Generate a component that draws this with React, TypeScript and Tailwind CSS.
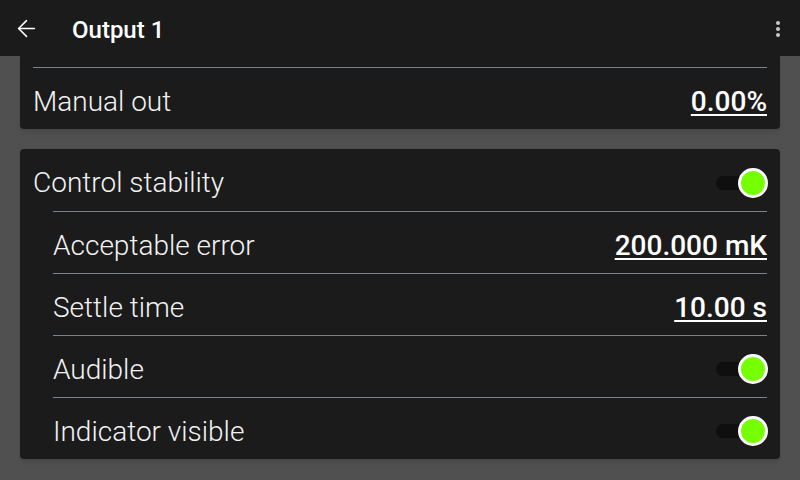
import { ArrowLeft } from "lucide-react";

type Row =
  | { label: string; kind: "value"; value: string; indent?: boolean }
  | { label: string; kind: "toggle"; on: boolean; indent?: boolean };

const stability: Row[] = [
  { label: "Control stability", kind: "toggle", on: true },
  { label: "Acceptable error", kind: "value", value: "200.000 mK", indent: true },
  { label: "Settle time", kind: "value", value: "10.00 s", indent: true },
  { label: "Audible", kind: "toggle", on: true, indent: true },
  { label: "Indicator visible", kind: "toggle", on: true, indent: true },
];

function Toggle({ on }: { on: boolean }) {
  return (
    <div className="relative h-[30px] w-[52px]">
      <div className="absolute left-0 top-[8px] h-[14px] w-[36px] rounded-full bg-[#0f0f0f]" />
      <div
        className={
          on
            ? "absolute right-0 top-0 h-[30px] w-[30px] rounded-full border-[3px] border-white bg-[#76ff03]"
            : "absolute left-0 top-0 h-[30px] w-[30px] rounded-full border-[3px] border-white bg-[#9e9e9e]"
        }
      />
    </div>
  );
}

function SettingRow({ row, first }: { row: Row; first?: boolean }) {
  return (
    <div className={row.indent ? "pl-5" : ""}>
      <div
        className={
          "flex h-[62px] items-center justify-between" +
          (first ? "" : " border-t border-[#7b848d]")
        }
      >
        <span className="mt-[6px] text-[28px] font-light leading-none text-[#f2f2f2]">
          {row.label}
        </span>
        {row.kind === "value" ? (
          <span className="mt-[6px] text-[28px] font-medium leading-none text-white underline decoration-2 underline-offset-[3px]">
            {row.value}
          </span>
        ) : (
          <div className="mr-[-1px] mt-[5px]">
            <Toggle on={row.on} />
          </div>
        )}
      </div>
    </div>
  );
}

export default function App() {
  return (
    <div
      className="flex h-[480px] w-[800px] flex-col overflow-hidden bg-[#505050]"
      style={{ fontFamily: "Roboto, 'Noto Sans', sans-serif" }}
    >
      <header className="flex h-14 shrink-0 items-center bg-[#1b1b1b] text-white">
        <div className="flex w-[72px] items-center pl-[13px]">
          <ArrowLeft size={27} strokeWidth={1.4} />
        </div>
        <h1 className="mt-[3px] flex-1 text-[24px] font-medium">Output 1</h1>
        <div className="mt-[1px] flex flex-col items-center gap-[2px] pr-[20px]">
          <span className="h-[4px] w-[4px] rounded-full bg-[#c8c8c8]" />
          <span className="h-[4px] w-[4px] rounded-full bg-[#c8c8c8]" />
          <span className="h-[4px] w-[4px] rounded-full bg-[#c8c8c8]" />
        </div>
      </header>

      <main className="flex flex-col gap-5">
        {/* tail of the output card, scrolled partly under the app bar */}
        <section className="mx-5 rounded-b bg-[#1b1b1b] px-[13px] pt-[11px] shadow-md">
          <SettingRow row={{ label: "Manual out", kind: "value", value: "0.00%" }} />
        </section>

        <section className="mx-5 rounded bg-[#1b1b1b] px-[13px] shadow-md">
          {stability.map((row, i) => (
            <SettingRow key={row.label} row={row} first={i === 0} />
          ))}
        </section>
      </main>
    </div>
  );
}
